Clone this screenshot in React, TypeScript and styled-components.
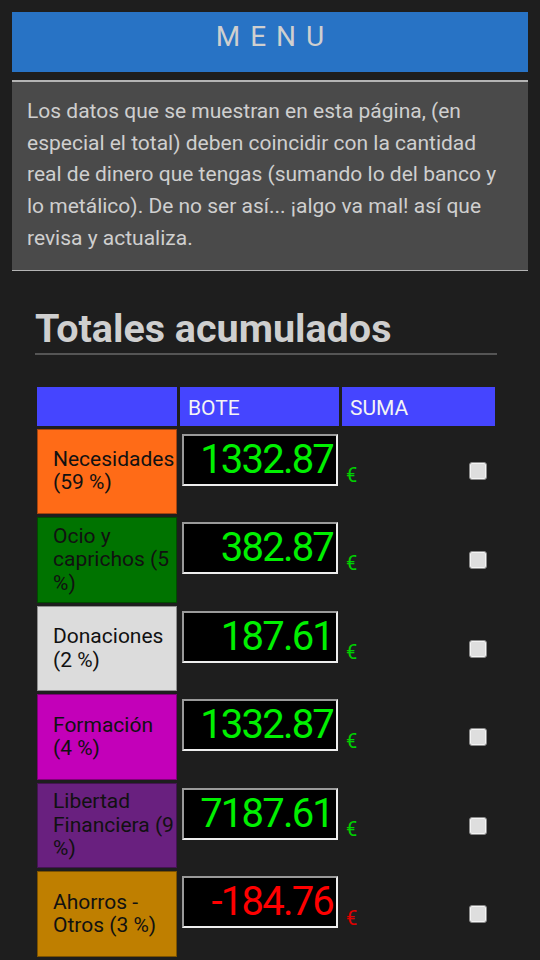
import React from "react";
import styled, { createGlobalStyle } from "styled-components";

const GlobalStyle = createGlobalStyle`
  html, body {
    margin: 0;
    padding: 0;
    background: #1e1e1e;
    font-family: Roboto, "Noto Sans", sans-serif;
  }
`;

type Bote = {
  name: string;
  color: string;
  value: string;
};

const botes: Bote[] = [
  { name: "Necesidades (59 %)", color: "#ff6b17", value: "1332.87" },
  { name: "Ocio y caprichos (5 %)", color: "#007300", value: "382.87" },
  { name: "Donaciones (2 %)", color: "#dcdcdc", value: "187.61" },
  { name: "Formación (4 %)", color: "#c300b9", value: "1332.87" },
  { name: "Libertad Financiera (9 %)", color: "#69207f", value: "7187.61" },
  { name: "Ahorros - Otros (3 %)", color: "#bf7f00", value: "-184.76" },
];

const App = () => {
  return (
    <>
      <GlobalStyle />
      <Page>
        <MenuBar>MENU</MenuBar>
        <InfoBox>
          Los datos que se muestran en esta página, (en especial el total) deben
          coincidir con la cantidad real de dinero que tengas (sumando lo del
          banco y lo metálico). De no ser así... ¡algo va mal! así que revisa y
          actualiza.
        </InfoBox>
        <Section>
          <Title>Totales acumulados</Title>
          <Table>
            <HeadCell />
            <HeadCell>BOTE</HeadCell>
            <HeadCell>SUMA</HeadCell>
            {botes.map((b) => {
              const negative = b.value.startsWith("-");
              return (
                <React.Fragment key={b.name}>
                  <LabelCell $bg={b.color}>{b.name}</LabelCell>
                  <ValueCell>
                    <Amount $negative={negative}>{b.value}</Amount>
                  </ValueCell>
                  <SumCell>
                    <Euro $negative={negative}>€</Euro>
                    <Check type="checkbox" />
                  </SumCell>
                </React.Fragment>
              );
            })}
          </Table>
        </Section>
      </Page>
    </>
  );
};

export default App;

const Page = styled.div`
  padding: 12px;
  display: flex;
  flex-direction: column;
`;

const MenuBar = styled.div`
  height: 60px;
  background: #2873c5;
  color: #cfcfcf;
  font-size: 28px;
  letter-spacing: 10px;
  text-indent: 10px;
  text-align: center;
  line-height: 50px;
`;

const InfoBox = styled.div`
  margin-top: 8px;
  background: #4a4a4a;
  border-top: 2px solid #b4b4b4;
  border-bottom: 1px solid #b4b4b4;
  color: #cfcfcf;
  font-size: 21px;
  line-height: 31.7px;
  padding: 14px 16px 15px 15px;
`;

const Section = styled.div`
  padding: 33px 31px 0 23px;
`;

const Title = styled.h2`
  margin: 0;
  color: #cfcfcf;
  font-size: 39.5px;
  font-weight: bold;
  line-height: 49px;
  border-bottom: 2px solid #555;
`;

const Table = styled.div`
  margin-top: 32px;
  display: grid;
  grid-template-columns: 140px 159px 153px;
  grid-auto-rows: auto;
  column-gap: 3px;
  row-gap: 3px;
  padding-left: 2px;
`;

const HeadCell = styled.div`
  background: #4545ff;
  color: #f4f4f4;
  font-size: 21px;
  height: 39px;
  line-height: 42px;
  padding-left: 8px;
`;

const LabelCell = styled.div<{ $bg: string }>`
  background: ${(p) => p.$bg};
  border: 1px solid rgba(0, 0, 0, 0.35);
  box-sizing: border-box;
  height: 85.6px;
  color: #111;
  font-size: 21px;
  line-height: 23.5px;
  padding: 0 0 0 15px;
  display: flex;
  align-items: center;
`;

const ValueCell = styled.div`
  padding: 5px 0 0 2px;
`;

const Amount = styled.div<{ $negative: boolean }>`
  width: 156px;
  height: 52px;
  box-sizing: border-box;
  background: #000;
  border: 2px solid;
  border-color: #9a9a9a #eeeeee #eeeeee #9a9a9a;
  color: ${(p) => (p.$negative ? "#ff0000" : "#00f000")};
  font-size: 40px;
  letter-spacing: -1.8px;
  line-height: 48px;
  text-align: right;
  padding-right: 3px;
  overflow: hidden;
`;

const SumCell = styled.div`
  display: flex;
  align-items: center;
  justify-content: space-between;
  padding: 0 8px 0 4px;
`;

const Euro = styled.span<{ $negative: boolean }>`
  color: ${(p) => (p.$negative ? "#e00000" : "#00d000")};
  font-size: 20px;
  padding-top: 7px;
`;

const Check = styled.input`
  appearance: none;
  margin: 0;
  width: 18px;
  height: 18px;
  border-radius: 3px;
  background: #dedede;
  border: 1px solid #8a8a8a;
  box-shadow: inset 0 0 0 1px #f4f4f4;
  box-sizing: border-box;
`;
